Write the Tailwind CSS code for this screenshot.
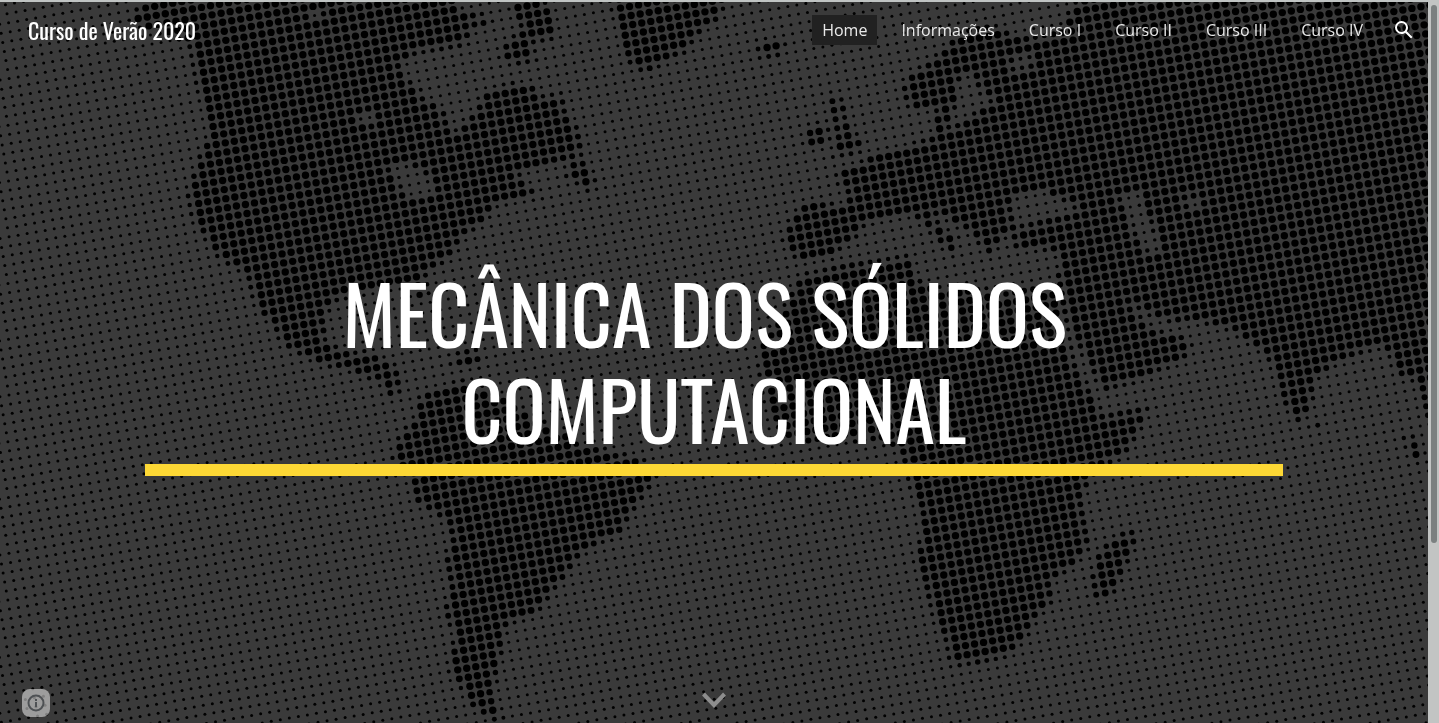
<!DOCTYPE html>
<html lang="pt-BR">
<head>
<meta charset="utf-8">
<meta name="viewport" content="width=device-width, initial-scale=1">
<title>Curso de Verão 2020</title>
<script src="https://cdn.jsdelivr.net/npm/@tailwindcss/browser@4"></script>
</head>
<body class="flex h-screen overflow-hidden bg-[#3a3a3a] text-white">
<div class="relative flex min-w-0 flex-1 flex-col border-t-2 border-[#c0c4c3]">
  <canvas id="map" width="1428" height="721" class="absolute inset-0 h-full w-full object-cover object-left-top" aria-hidden="true"></canvas>

  <header class="relative flex h-14 items-center justify-between pr-3 pl-7">
    <a href="#" class="font-['Oswald','Liberation_Sans_Narrow','Roboto_Condensed','Open_Sans',sans-serif] text-[22px] leading-8">Curso de Verão 2020</a>
    <div class="flex items-center gap-[19px]">
      <nav class="flex items-center gap-[14px] font-['Open_Sans',sans-serif] text-base leading-[30px] text-white/90">
        <a href="#" aria-current="page" class="bg-[#212121] px-[10px]">Home</a>
        <a href="#" class="px-[10px]">Informações</a>
        <a href="#" class="px-[10px]">Curso I</a>
        <a href="#" class="px-[10px]">Curso II</a>
        <a href="#" class="px-[10px]">Curso III</a>
        <a href="#" class="px-[10px]">Curso IV</a>
      </nav>
      <button type="button" aria-label="Pesquisar">
        <svg class="size-6" viewBox="0 0 24 24" fill="currentColor"><path d="M20.49 19l-5.73-5.73C15.53 12.2 16 10.91 16 9.5A6.5 6.5 0 1 0 9.5 16c1.41 0 2.7-.47 3.77-1.24L19 20.49 20.49 19zM5 9.5C5 7.01 7.01 5 9.5 5S14 7.01 14 9.5 11.99 14 9.5 14 5 11.99 5 9.5z"/></svg>
      </button>
    </div>
  </header>

  <main class="relative mx-auto flex w-[80%] max-w-[1138px] flex-1 flex-col justify-center pb-[42px]">
    <h1 class="border-b-12 border-[#fdd835] pb-2 text-center font-['Oswald','Liberation_Sans_Narrow','Roboto_Condensed','Open_Sans',sans-serif] text-[80px] leading-24 uppercase">Mecânica dos Sólidos&nbsp;<br>Computacional</h1>
  </main>

  <button type="button" aria-label="Rolar para baixo" class="absolute bottom-3 left-1/2 -translate-x-1/2 text-[#8e8e8e]">
    <svg class="h-6 w-6" viewBox="0 0 24 24" fill="none" stroke="currentColor" stroke-width="4"><path d="M1.500 7L12 18L22.500 7"/></svg>
  </button>
  <button type="button" aria-label="Informações do site" class="absolute bottom-[6px] left-[22px] flex size-7 items-center justify-center rounded-lg bg-white/50 text-[#4e5154]">
    <svg class="size-5" viewBox="0 0 20 20" fill="none" stroke="currentColor" stroke-width="2"><circle cx="10" cy="10" r="7.500"/><path d="M10 9v5M10 6v2"/></svg>
  </button>
</div>
<div class="w-[11px] shrink-0 bg-[#c2c4c3] pt-[5px]" aria-hidden="true">
  <div class="ml-[3px] h-[538px] w-[6px] rounded-full bg-[#7b8080]"></div>
</div>

<script>
// Halftone world map: a tilted dot lattice, dots swell over land.
const land = [
  // North America
  "130,20 145,3 155,-9 455,-9 460,12 480,14 492,22 467,27 468,40 457,46 413,53 399,63 401,72 409,82 419,90 422,99 434,104 444,113 449,130 453,137 462,126 476,113 482,96 509,84 531,85 541,98 561,95 566,117 576,127 582,143 581,156 543,165 509,174 523,179 528,189 541,196 520,199 494,204 488,214 480,224 457,238 458,246 447,258 432,268 424,276 426,293 420,302 412,281 400,284 367,291 340,297 329,303 325,318 323,343 343,350 350,354 367,352 375,356 396,367 400,388 392,398 386,388 378,379 360,374 347,368 320,363 309,356 291,349 279,337 274,323 264,317 255,301 248,274 219,257 195,220 188,193 202,153 211,135 205,110 197,80 190,45 175,37 145,28",
  "562,172 580,158 594,177 594,188 583,190 575,180",
  "510,8 525,-5 542,0 550,12 556,37 530,41 535,60 513,64 499,55 510,40 525,30",
  // Greenland
  "608,-9 614,10 620,32 625,52 634,68 650,71 664,60 684,52 700,30 718,18 728,-9",
  "446,360 466,351 480,353 478,366 466,366",
  // South America
  "393,460 398,440 405,430 419,417 416,408 421,397 437,390 463,382 503,397 523,410 537,420 567,433 577,446 600,450 643,460 656,477 640,499 627,518 624,530 593,545 578,557 562,579 553,589 539,610 505,625 501,653 496,671 491,700 505,717 493,720 472,705 462,687 449,671 452,651 457,634 448,620 446,607 451,587 446,560 452,540 447,520 430,509 415,500 412,483",
  // Iceland, Ireland, Great Britain
  "757,43 783,39 781,54 760,58",
  "810,127 824,122 829,138 815,149 804,142",
  "834,92 844,104 843,116 853,132 865,148 846,155 830,155 838,142 835,123 830,107",
  // Eurasia
  "907,104 904,85 912,74 930,63 943,52 953,40 973,27 990,25 1012,35 1040,38 1062,30 1066,17 1074,7 1084,-9 1440,-9 1440,390 1428,425 1420,387 1417,379 1397,374 1392,357 1383,344 1340,360 1313,378 1311,408 1297,423 1283,398 1277,374 1266,354 1247,340 1232,328 1193,320 1167,320 1150,314 1127,300 1127,306 1141,320 1157,333 1183,337 1191,347 1184,358 1133,381 1103,390 1096,377 1086,357 1076,340 1064,310 1057,278 1063,258 1050,248 1017,249 1012,236 1013,228 997,243 990,255 977,240 969,229 953,223 937,209 934,218 941,227 957,240 953,254 943,246 930,229 913,212 897,216 863,223 860,233 843,244 833,256 798,260 786,245 784,237 793,216 807,202 843,207 850,198 847,187 836,180 840,170 857,167 873,155 910,147 934,138 934,122 938,106 920,110",
  // Africa
  "800,277 840,266 873,262 910,256 914,279 947,292 973,287 1000,295 1053,283 1064,325 1072,360 1083,381 1097,404 1101,417 1127,411 1148,408 1140,428 1127,451 1110,461 1093,474 1081,497 1084,514 1088,547 1074,564 1050,580 1053,600 1037,615 1023,640 1007,654 980,662 953,665 946,640 936,620 929,597 916,560 921,540 922,507 911,487 906,463 899,447 870,438 813,442 785,437 770,411 762,377 759,350 778,320 787,305",
  "1122,534 1135,531 1134,545 1127,561 1114,591 1097,602 1092,580 1099,552",
  "1402,437 1411,434 1424,458 1417,463 1408,448", "1311,424 1319,424 1318,430 1312,430"
];
const water = [
  "385,166 402,162 424,170 430,180 437,187 430,197 412,200 400,192 400,183",
  "355,115 374,109 377,124 360,125", "306,12 325,10 322,18 308,20",
  "964,72 974,73 980,91 996,98 968,120 944,132 952,116 957,99 956,85",
  "1005,64 1030,52 1032,66 1014,72",
  "1009,204 1016,194 1046,189 1053,196 1077,203 1076,214 1047,219 1016,228",
  "1117,196 1142,189 1141,203 1152,222 1161,249 1152,257 1136,238 1128,216",
  "1183,198 1202,195 1201,208 1190,212"
];
const shape = s => new Path2D("M" + s.split(" ").join("L") + "Z");
const ctx = document.getElementById("map").getContext("2d");
const lands = land.map(shape), waters = water.map(shape);
const inside = (x, y) => lands.some(p => ctx.isPointInPath(p, x, y)) && !waters.some(p => ctx.isPointInPath(p, x, y));
const ux = 9.03, uy = -1.59, ox = 456.7, oy = 558.3;
ctx.fillStyle = "#000";
for (let i = -90; i < 150; i++) for (let j = -100; j < 60; j++) {
  const x = ox + i * ux - j * uy, y = oy + i * uy + j * ux;
  if (x < -5 || x > 1433 || y < -5 || y > 728) continue;
  let hits = 0;
  for (let a = -1; a <= 1; a++) for (let b = -1; b <= 1; b++) if (inside(x + a * 3, y + b * 3)) hits++;
  ctx.beginPath();
  ctx.arc(x, y - 2, 1.5 + 2.2 * hits / 9, 0, 7);
  ctx.fill();
}
</script>
</body>
</html>
